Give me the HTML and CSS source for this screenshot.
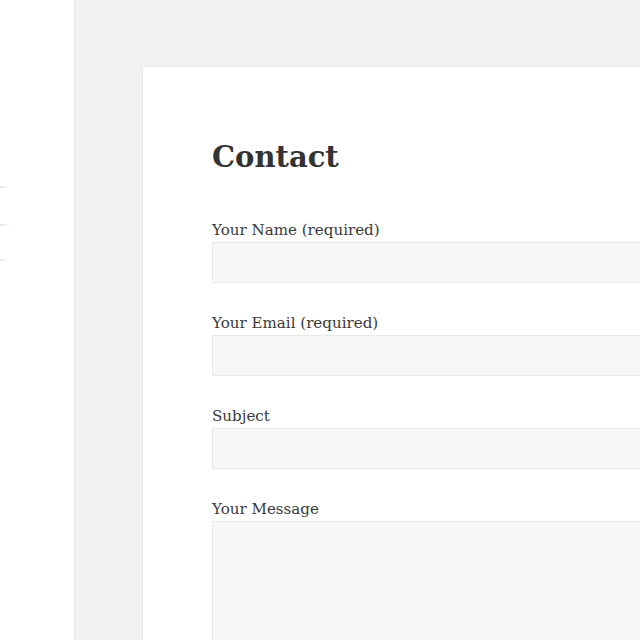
FILE: index.html
```html
<!DOCTYPE html>
<html>
<head>
<meta charset="utf-8">
<link rel="stylesheet" href="styles.css">
</head>
<body>
<div class="page">
  <aside class="sidebar">
    <div class="rule r1"></div>
    <div class="rule r2"></div>
    <div class="rule r3"></div>
  </aside>
  <main class="main">
    <article class="card">
      <h1 class="title">Contact</h1>
      <form class="form">
        <div class="field">
          <label class="label">Your Name (required)</label>
          <div class="input"></div>
        </div>
        <div class="field">
          <label class="label">Your Email (required)</label>
          <div class="input"></div>
        </div>
        <div class="field">
          <label class="label">Subject</label>
          <div class="input"></div>
        </div>
        <div class="field">
          <label class="label">Your Message</label>
          <div class="input textarea"></div>
        </div>
      </form>
    </article>
  </main>
</div>
</body>
</html>
```

FILE: styles.css
```css
html, body {
  margin: 0;
  padding: 0;
  height: 100%;
  overflow: hidden;
}
body {
  background: #f1f1f1;
  font-family: "DejaVu Serif", "Liberation Serif", serif;
  color: #333;
}
.page {
  display: flex;
  height: 640px;
}
.sidebar {
  width: 74px;
  flex: none;
  background: #fff;
  box-shadow: 0 0 1px rgba(0,0,0,0.25);
  display: flex;
  flex-direction: column;
  position: relative;
  z-index: 1;
}
.rule {
  width: 10px;
  height: 2px;
  background: linear-gradient(to right, #e4e4e4, rgba(255,255,255,0));
}
.r1 { margin-top: 186px; }
.r2 { margin-top: 36px; }
.r3 { margin-top: 33px; }
.main {
  flex: 1;
  padding: 67px 0 0 69px;
  min-width: 0;
}
.card {
  background: #fff;
  box-shadow: 0 0 1px rgba(0,0,0,0.2);
  width: 700px;
  height: 700px;
  padding: 70px 0 0 69px;
  box-sizing: border-box;
}
.title {
  margin: 0;
  font-size: 29px;
  line-height: 40px;
  font-weight: bold;
  color: #333;
}
.form {
  margin-top: 41px;
}
.field {
  margin-bottom: 28px;
}
.label {
  display: block;
  font-size: 15.1px;
  line-height: 24px;
  color: #3a3a3a;
}
.input {
  height: 39px;
  background: #f7f7f7;
  border: 1px solid #e8e8e8;
}
.textarea {
  height: 200px;
}
```
